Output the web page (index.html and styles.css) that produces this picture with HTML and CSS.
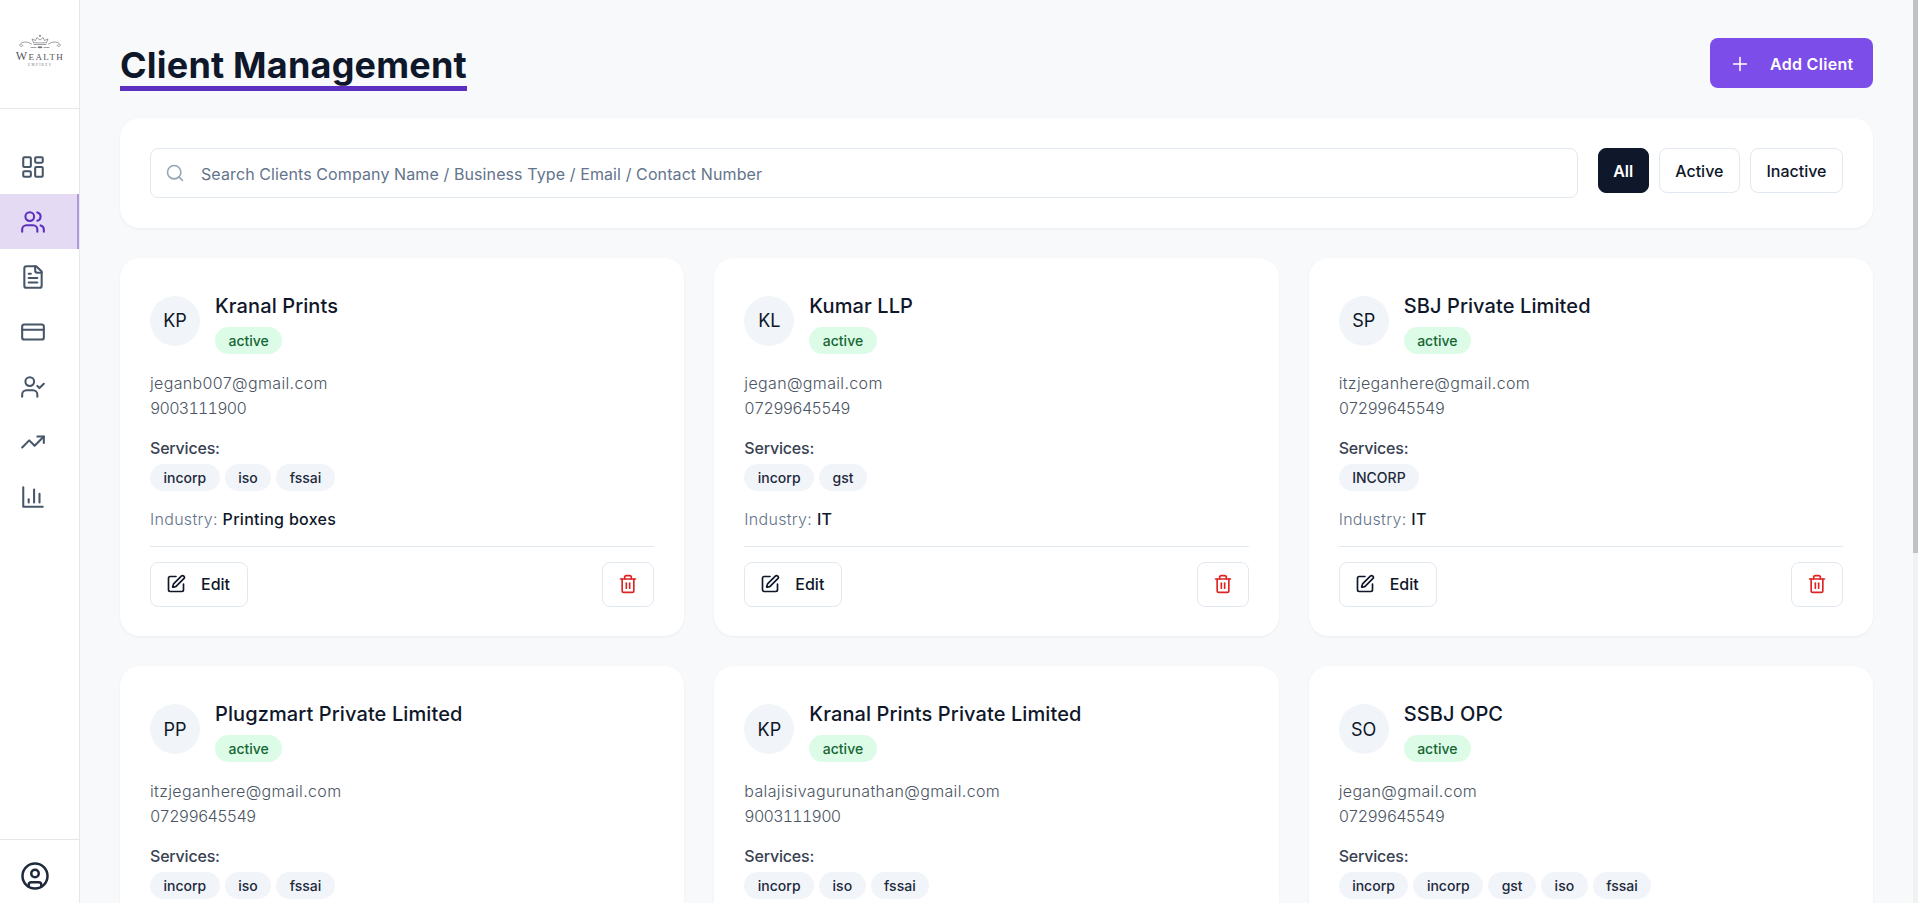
FILE: index.html
```html
<!DOCTYPE html>
<html lang="en">

<head>
    <meta charset="UTF-8">
    <meta name="viewport" content="width=device-width, initial-scale=1.0">
    <title>Client Management</title>
    <link rel="stylesheet" href="styles.css">
</head>

<body>
    <!-- Icon set, reused below with <use> -->
    <svg class="icon-defs" xmlns="http://www.w3.org/2000/svg">
        <symbol id="i-dashboard" viewBox="0 0 24 24"><rect x="3" y="3" width="7" height="9" rx="1"/><rect x="14" y="3" width="7" height="5" rx="1"/><rect x="14" y="12" width="7" height="9" rx="1"/><rect x="3" y="16" width="7" height="5" rx="1"/></symbol>
        <symbol id="i-users" viewBox="0 0 24 24"><path d="M16 21v-2a4 4 0 0 0-4-4H6a4 4 0 0 0-4 4v2"/><circle cx="9" cy="7" r="4"/><path d="M22 21v-2a4 4 0 0 0-3-3.870"/><path d="M16 3.130a4 4 0 0 1 0 7.750"/></symbol>
        <symbol id="i-file" viewBox="0 0 24 24"><path d="M15 2H6a2 2 0 0 0-2 2v16a2 2 0 0 0 2 2h12a2 2 0 0 0 2-2V7Z"/><path d="M14 2v4a2 2 0 0 0 2 2h4"/><path d="M10 9H8"/><path d="M16 13H8"/><path d="M16 17H8"/></symbol>
        <symbol id="i-card" viewBox="0 0 24 24"><rect x="2" y="5" width="20" height="14" rx="2"/><path d="M2 10h20"/></symbol>
        <symbol id="i-user-check" viewBox="0 0 24 24"><path d="M16 21v-2a4 4 0 0 0-4-4H6a4 4 0 0 0-4 4v2"/><circle cx="9" cy="7" r="4"/><path d="m16 11 2 2 4-4"/></symbol>
        <symbol id="i-trend" viewBox="0 0 24 24"><path d="m22 7-8.500 8.500-5-5L2 17"/><path d="M16 7h6v6"/></symbol>
        <symbol id="i-chart" viewBox="0 0 24 24"><path d="M3 3v18h18"/><path d="M18 17V9"/><path d="M13 17V5"/><path d="M8 17v-3"/></symbol>
        <symbol id="i-profile" viewBox="0 0 24 24"><circle cx="12" cy="12" r="10"/><circle cx="12" cy="10" r="3"/><path d="M7 20.662V19a2 2 0 0 1 2-2h6a2 2 0 0 1 2 2v1.662"/></symbol>
        <symbol id="i-edit" viewBox="0 0 24 24"><path d="M12 3H5a2 2 0 0 0-2 2v14a2 2 0 0 0 2 2h14a2 2 0 0 0 2-2v-7"/><path d="M18.375 2.625a1 1 0 0 1 3 3l-9.013 9.014a2 2 0 0 1-.853.505l-2.873.84a.5.5 0 0 1-.62-.62l.84-2.873a2 2 0 0 1 .506-.852z"/></symbol>
        <symbol id="i-trash" viewBox="0 0 24 24"><path d="M3 6h18"/><path d="M19 6v14c0 1-1 2-2 2H7c-1 0-2-1-2-2V6"/><path d="M8 6V4c0-1 1-2 2-2h4c1 0 2 1 2 2v2"/><path d="M10 11v6"/><path d="M14 11v6"/></symbol>
        <symbol id="i-search" viewBox="0 0 24 24"><circle cx="11" cy="11" r="8"/><path d="m21 21-4.300-4.300"/></symbol>
        <symbol id="i-plus" viewBox="0 0 24 24"><path d="M5 12h14"/><path d="M12 5v14"/></symbol>
    </svg>

    <div class="app">
        <aside class="sidebar">
            <div class="logo">
                <svg class="logo-mark" viewBox="0 0 50 33" xmlns="http://www.w3.org/2000/svg">
                    <g fill="none" stroke="#5f5f68" stroke-width="0.6" stroke-linecap="round" stroke-linejoin="round">
                        <path d="M18.500 8.500l-1.500-3.500 3.500 1.500L22 3.500l3 2.500 3-2.500 1.500 3 3.500-1.500-1.500 3.500z"/>
                        <path d="M19 10.500h12"/>
                        <path d="M16.500 10c-3-2-6-2.500-9-1.500-3.500 1.200-3.500 4-1 4 1.600 0 1.600-2 .2-2"/>
                        <path d="M33.500 10c3-2 6-2.500 9-1.500 3.500 1.200 3.500 4 1 4-1.600 0-1.600-2-.2-2"/>
                        <path d="M16 13.500h5"/>
                        <path d="M29 13.500h5"/>
                    </g>
                    <circle cx="25" cy="1.800" r="0.900" fill="#5f5f68"/>
                    <ellipse cx="25" cy="13.200" rx="2.500" ry="1" fill="#77777f"/>
                    <text class="logo-name" x="25" y="26" text-anchor="middle"><tspan class="logo-cap">W</tspan>EALTH</text>
                    <text class="logo-sub" x="25" y="32" text-anchor="middle">EMPIRES</text>
                </svg>
            </div>
            <nav class="side-nav">
                <a class="side-link" href="#"><svg class="icon"><use href="#i-dashboard"/></svg></a>
                <a class="side-link active" href="#"><svg class="icon"><use href="#i-users"/></svg></a>
                <a class="side-link" href="#"><svg class="icon"><use href="#i-file"/></svg></a>
                <a class="side-link" href="#"><svg class="icon"><use href="#i-card"/></svg></a>
                <a class="side-link" href="#"><svg class="icon"><use href="#i-user-check"/></svg></a>
                <a class="side-link" href="#"><svg class="icon"><use href="#i-trend"/></svg></a>
                <a class="side-link" href="#"><svg class="icon"><use href="#i-chart"/></svg></a>
            </nav>
            <div class="side-bottom">
                <svg class="icon profile-icon"><use href="#i-profile"/></svg>
            </div>
        </aside>

        <main class="main">
            <div class="page-header">
                <h1 class="page-title">Client Management</h1>
                <button class="add-button">
                    <svg class="icon"><use href="#i-plus"/></svg>
                    Add Client
                </button>
            </div>

            <div class="filter-card">
                <div class="search-box">
                    <svg class="icon search-icon"><use href="#i-search"/></svg>
                    <input class="search-input" type="text" placeholder="Search Clients Company Name / Business Type / Email / Contact Number">
                </div>
                <div class="filter-buttons">
                    <button class="filter-button selected">All</button>
                    <button class="filter-button">Active</button>
                    <button class="filter-button">Inactive</button>
                </div>
            </div>

            <div class="client-grid">
                <div class="client-card">
                    <div class="client-head">
                        <div class="avatar">KP</div>
                        <div>
                            <h3 class="client-name">Kranal Prints</h3>
                            <span class="status">active</span>
                        </div>
                    </div>
                    <p class="contact"><span class="email">jeganb007@gmail.com</span><br>9003111900</p>
                    <p class="services-label">Services:</p>
                    <div class="tags"><span class="tag">incorp</span><span class="tag">iso</span><span class="tag">fssai</span></div>
                    <p class="industry">Industry: <strong>Printing boxes</strong></p>
                    <div class="card-actions">
                        <button class="edit-button"><svg class="icon"><use href="#i-edit"/></svg>Edit</button>
                        <button class="delete-button"><svg class="icon"><use href="#i-trash"/></svg></button>
                    </div>
                </div>

                <div class="client-card">
                    <div class="client-head">
                        <div class="avatar">KL</div>
                        <div>
                            <h3 class="client-name">Kumar LLP</h3>
                            <span class="status">active</span>
                        </div>
                    </div>
                    <p class="contact"><span class="email">jegan@gmail.com</span><br>07299645549</p>
                    <p class="services-label">Services:</p>
                    <div class="tags"><span class="tag">incorp</span><span class="tag">gst</span></div>
                    <p class="industry">Industry: <strong>IT</strong></p>
                    <div class="card-actions">
                        <button class="edit-button"><svg class="icon"><use href="#i-edit"/></svg>Edit</button>
                        <button class="delete-button"><svg class="icon"><use href="#i-trash"/></svg></button>
                    </div>
                </div>

                <div class="client-card">
                    <div class="client-head">
                        <div class="avatar">SP</div>
                        <div>
                            <h3 class="client-name">SBJ Private Limited</h3>
                            <span class="status">active</span>
                        </div>
                    </div>
                    <p class="contact"><span class="email">itzjeganhere@gmail.com</span><br>07299645549</p>
                    <p class="services-label">Services:</p>
                    <div class="tags"><span class="tag">INCORP</span></div>
                    <p class="industry">Industry: <strong>IT</strong></p>
                    <div class="card-actions">
                        <button class="edit-button"><svg class="icon"><use href="#i-edit"/></svg>Edit</button>
                        <button class="delete-button"><svg class="icon"><use href="#i-trash"/></svg></button>
                    </div>
                </div>

                <div class="client-card">
                    <div class="client-head">
                        <div class="avatar">PP</div>
                        <div>
                            <h3 class="client-name">Plugzmart Private Limited</h3>
                            <span class="status">active</span>
                        </div>
                    </div>
                    <p class="contact"><span class="email">itzjeganhere@gmail.com</span><br>07299645549</p>
                    <p class="services-label">Services:</p>
                    <div class="tags"><span class="tag">incorp</span><span class="tag">iso</span><span class="tag">fssai</span></div>
                </div>

                <div class="client-card">
                    <div class="client-head">
                        <div class="avatar">KP</div>
                        <div>
                            <h3 class="client-name">Kranal Prints Private Limited</h3>
                            <span class="status">active</span>
                        </div>
                    </div>
                    <p class="contact"><span class="email">balajisivagurunathan@gmail.com</span><br>9003111900</p>
                    <p class="services-label">Services:</p>
                    <div class="tags"><span class="tag">incorp</span><span class="tag">iso</span><span class="tag">fssai</span></div>
                </div>

                <div class="client-card">
                    <div class="client-head">
                        <div class="avatar">SO</div>
                        <div>
                            <h3 class="client-name">SSBJ OPC</h3>
                            <span class="status">active</span>
                        </div>
                    </div>
                    <p class="contact"><span class="email">jegan@gmail.com</span><br>07299645549</p>
                    <p class="services-label">Services:</p>
                    <div class="tags"><span class="tag">incorp</span><span class="tag">incorp</span><span class="tag">gst</span><span class="tag">iso</span><span class="tag">fssai</span></div>
                </div>
            </div>
        </main>

        <!-- The page scrollbar, drawn because the browser hides its own -->
        <div class="scroll-track">
            <div class="scroll-thumb"></div>
        </div>
    </div>
</body>

</html>
```

FILE: styles.css
```css
/* Base */
* {
    box-sizing: border-box;
}

body {
    font-family: Inter, 'Noto Sans', sans-serif;
    margin: 0;
    background-color: #f8f9fb;
    color: #0f172a;
    font-size: 16px;
}

.icon-defs {
    display: none;
}

.icon {
    width: 20px;
    height: 20px;
    fill: none;
    stroke: currentColor;
    stroke-width: 2;
    stroke-linecap: round;
    stroke-linejoin: round;
    flex-shrink: 0;
}

.app {
    display: flex;
    height: 100vh;
    overflow: hidden;
}

/* Sidebar */
.sidebar {
    width: 80px;
    flex-shrink: 0;
    background-color: white;
    border-right: 1px solid #e5e7eb;
    display: flex;
    flex-direction: column;
}

.logo {
    height: 109px;
    border-bottom: 1px solid #e5e7eb;
    display: flex;
    justify-content: center;
    align-items: center;
    padding-bottom: 7px;
}

.logo-mark {
    width: 50px;
    height: 33px;
}

.logo-name {
    font-family: 'Liberation Serif', serif;
    font-size: 9px;
    letter-spacing: 1.400px;
    fill: #55555e;
}

.logo-cap {
    font-size: 12px;
}

.logo-sub {
    font-family: 'Liberation Serif', serif;
    font-size: 3.500px;
    letter-spacing: 1.300px;
    fill: #77777f;
}

.side-nav {
    flex: 1;
    padding-top: 30px;
}

.side-link {
    height: 55px;
    display: flex;
    align-items: center;
    padding-left: 20px;
    color: #475569;
    border-right: 2px solid transparent;
}

.side-link .icon {
    width: 26px;
    height: 26px;
    stroke-width: 1.900;
}

.side-link.active {
    background-color: #e5daf3;
    color: #5b2fc0;
    border-right-color: #b398d8;
}

.side-bottom {
    height: 64px;
    border-top: 1px solid #e5e7eb;
    display: flex;
    align-items: center;
    padding: 8px 0 0 20px;
}

.profile-icon {
    width: 30px;
    height: 30px;
    color: #1e293b;
}

/* Main area */
.main {
    flex: 1;
    min-width: 0;
    overflow: hidden;
    padding: 38px 40px 40px;
}

.scroll-track {
    width: 5px;
    flex-shrink: 0;
    background-color: #f1f1f1;
}

.scroll-thumb {
    height: 553px;
    background-color: #c1c1c1;
}

.page-header {
    display: flex;
    justify-content: space-between;
    align-items: center;
    margin-bottom: 30px;
}

.page-title {
    position: relative;
    margin: 0;
    height: 50px;
    padding-top: 2px;
    font-size: 36px;
    font-weight: 700;
    line-height: 50px;
    letter-spacing: 0.200px;
}

.page-title::after {
    content: "";
    position: absolute;
    left: 0;
    right: 0;
    top: 48px;
    height: 5px;
    background-color: #5b2fc0;
}

.add-button {
    display: flex;
    align-items: center;
    gap: 19px;
    width: 163px;
    height: 50px;
    padding: 1px 19px 0;
    border: none;
    border-radius: 8px;
    background-color: #7c4de8;
    color: white;
    font-family: inherit;
    font-size: 16px;
    font-weight: 600;
    letter-spacing: 0.300px;
}

.add-button .icon {
    width: 22px;
    height: 22px;
    stroke-width: 1.700;
}

/* Search and filters */
.filter-card {
    display: flex;
    align-items: flex-start;
    gap: 20px;
    padding: 30px;
    background-color: white;
    border-radius: 20px;
    box-shadow: 0 1px 3px rgba(15, 23, 42, 0.05);
    margin-bottom: 29.800px;
}

.search-box {
    flex: 1;
    display: flex;
    align-items: center;
    height: 50px;
    padding: 0 14px;
    gap: 16px;
    border: 1px solid #e2e8f0;
    border-radius: 8px;
}

.search-icon {
    color: #94a3b8;
    stroke-width: 1.900;
}

.search-input {
    flex: 1;
    border: none;
    outline: none;
    padding: 2px 0 0;
    font-family: inherit;
    font-size: 16px;
    letter-spacing: 0.100px;
    color: #0f172a;
}

.search-input::placeholder {
    color: #64748b;
    opacity: 1;
}

.filter-buttons {
    display: flex;
    gap: 10px;
}

.filter-button {
    height: 45px;
    padding: 0 15.500px;
    background-color: white;
    border: 1px solid #e2e8f0;
    border-radius: 8px;
    font-family: inherit;
    font-size: 16px;
    font-weight: 500;
    color: #0f172a;
}

.filter-button.selected {
    padding: 0 14.500px;
    background-color: #0f172a;
    border-color: #0f172a;
    color: white;
    font-weight: 600;
}

/* Client cards */
.client-grid {
    display: grid;
    grid-template-columns: repeat(3, 1fr);
    gap: 30px;
}

.client-card {
    background-color: white;
    border-radius: 20px;
    padding: 33px 30px 29.600px;
    box-shadow: 0 1px 3px rgba(15, 23, 42, 0.05);
}

.client-head {
    display: flex;
    align-items: flex-start;
    gap: 15px;
}

.avatar {
    width: 50px;
    height: 50px;
    margin-top: 5px;
    flex-shrink: 0;
    border-radius: 50%;
    background-color: #f1f5f9;
    display: flex;
    align-items: center;
    justify-content: center;
    font-size: 18px;
}

.client-name {
    margin: 0 0 6px;
    font-size: 20px;
    font-weight: 500;
    line-height: 30px;
    letter-spacing: 0.100px;
}

.status {
    display: block;
    width: fit-content;
    height: 27px;
    line-height: 27px;
    padding: 0 13.500px;
    border-radius: 14px;
    background-color: #dcfce7;
    color: #166534;
    font-size: 14px;
    font-weight: 500;
}

.contact {
    margin: 17px 0 0;
    line-height: 25px;
    color: #4b5563;
    font-weight: 300;
    font-variant-numeric: tabular-nums;
    letter-spacing: -0.750px;
}

.email {
    letter-spacing: 0.350px;
    font-variant-numeric: normal;
}

.services-label {
    margin: 15px 0 0;
    line-height: 25px;
    font-weight: 500;
    color: #374151;
    letter-spacing: -0.200px;
}

.tags {
    display: flex;
    gap: 5px;
    margin-top: 3px;
}

.tag {
    height: 27px;
    line-height: 27px;
    padding: 0 13.500px;
    border-radius: 14px;
    background-color: #f1f5f9;
    color: #1e293b;
    font-size: 14px;
    font-weight: 500;
}

.industry {
    margin: 16px 0 0;
    line-height: 25px;
    color: #64748b;
    font-weight: 300;
    letter-spacing: 0.300px;
}

.industry strong {
    color: #0f172a;
    font-weight: 500;
}

.card-actions {
    display: flex;
    justify-content: space-between;
    margin-top: 14px;
    padding-top: 15px;
    border-top: 1px solid #e2e8f0;
}

.edit-button,
.delete-button {
    display: flex;
    align-items: center;
    height: 45px;
    background-color: white;
    border: 1px solid #e2e8f0;
    border-radius: 8px;
    font-family: inherit;
}

.edit-button {
    gap: 15px;
    width: 98px;
    padding: 0 15px;
    font-size: 16px;
    font-weight: 500;
    color: #0f172a;
}

.delete-button {
    justify-content: center;
    width: 52px;
    padding: 0;
    color: #dc2626;
}
```
